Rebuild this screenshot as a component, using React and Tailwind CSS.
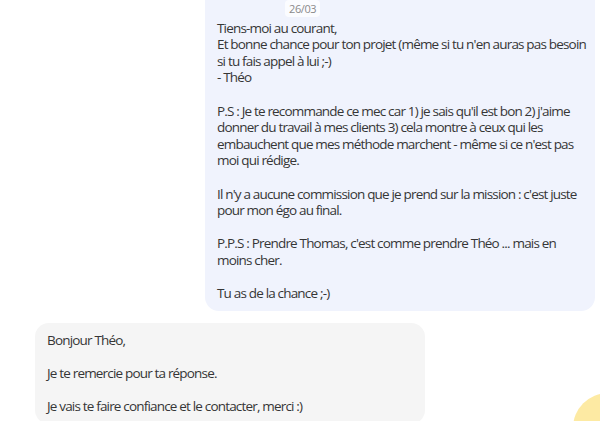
import React from 'react';

const sent = [
  ['Tiens-moi au courant,', 'Et bonne chance pour ton projet (même si tu n\'en auras pas besoin', 'si tu fais appel à lui ;-)', '- Théo'],
  ['P.S : Je te recommande ce mec car 1) je sais qu\'il est bon 2) j\'aime', 'donner du travail à mes clients 3) cela montre à ceux qui les', 'embauchent que mes méthode marchent - même si ce n\'est pas', 'moi qui rédige.'],
  ['Il n\'y a aucune commission que je prend sur la mission : c\'est juste', 'pour mon égo au final.'],
  ['P.P.S : Prendre Thomas, c\'est comme prendre Théo ... mais en', 'moins cher.'],
  ['Tu as de la chance ;-)'],
];

const received = [
  ['Bonjour Théo,'],
  ['Je te remercie pour ta réponse.'],
  ['Je vais te faire confiance et le contacter, merci :)'],
];

const Paragraphs = ({ blocks }) => (
  <div className="flex flex-col gap-[16.6px]">
    {blocks.map((lines, i) => (
      <p key={i}>
        {lines.map((line, j) => (
          <span key={j} className="block whitespace-nowrap">{line}</span>
        ))}
      </p>
    ))}
  </div>
);

export default function App() {
  return (
    <div
      className="relative w-[600px] h-[421px] overflow-hidden bg-white text-[13.5px] leading-[16.6px] tracking-[-0.82px] text-[#363636]"
      style={{ fontFamily: '"Open Sans", "Noto Sans", sans-serif' }}
    >
      <div className="flex flex-col gap-[12px] mt-[-21.5px]">
        {/* Message sent */}
        <div className="ml-auto mr-[5px] w-[390px] bg-[#f0f3fd] rounded-[14px] pt-[9px] pb-[9px] px-[12px]">
          <div className="flex items-start h-[29.5px] mb-[2.7px]">
            <span className="w-[68px] -mt-[4px] text-[#5a5a5a]">Répo</span>
            <span className="mt-[12.5px] h-[17px] px-[4px] rounded-[4px] bg-[#fbfcff] text-[11px] leading-[17px] tracking-[-0.4px] text-[#8a8a8a]">
              26/03
            </span>
          </div>
          <Paragraphs blocks={sent} />
        </div>

        {/* Message received */}
        <div className="ml-[35px] w-[390px] bg-[#f5f5f5] rounded-[14px] pt-[9px] pb-[9px] px-[12px]">
          <Paragraphs blocks={received} />
        </div>
      </div>

      {/* chat launcher */}
      <div className="absolute left-[573px] top-[393px] w-[70px] h-[70px] rounded-full bg-[#fdeaa3]" />
    </div>
  );
}
